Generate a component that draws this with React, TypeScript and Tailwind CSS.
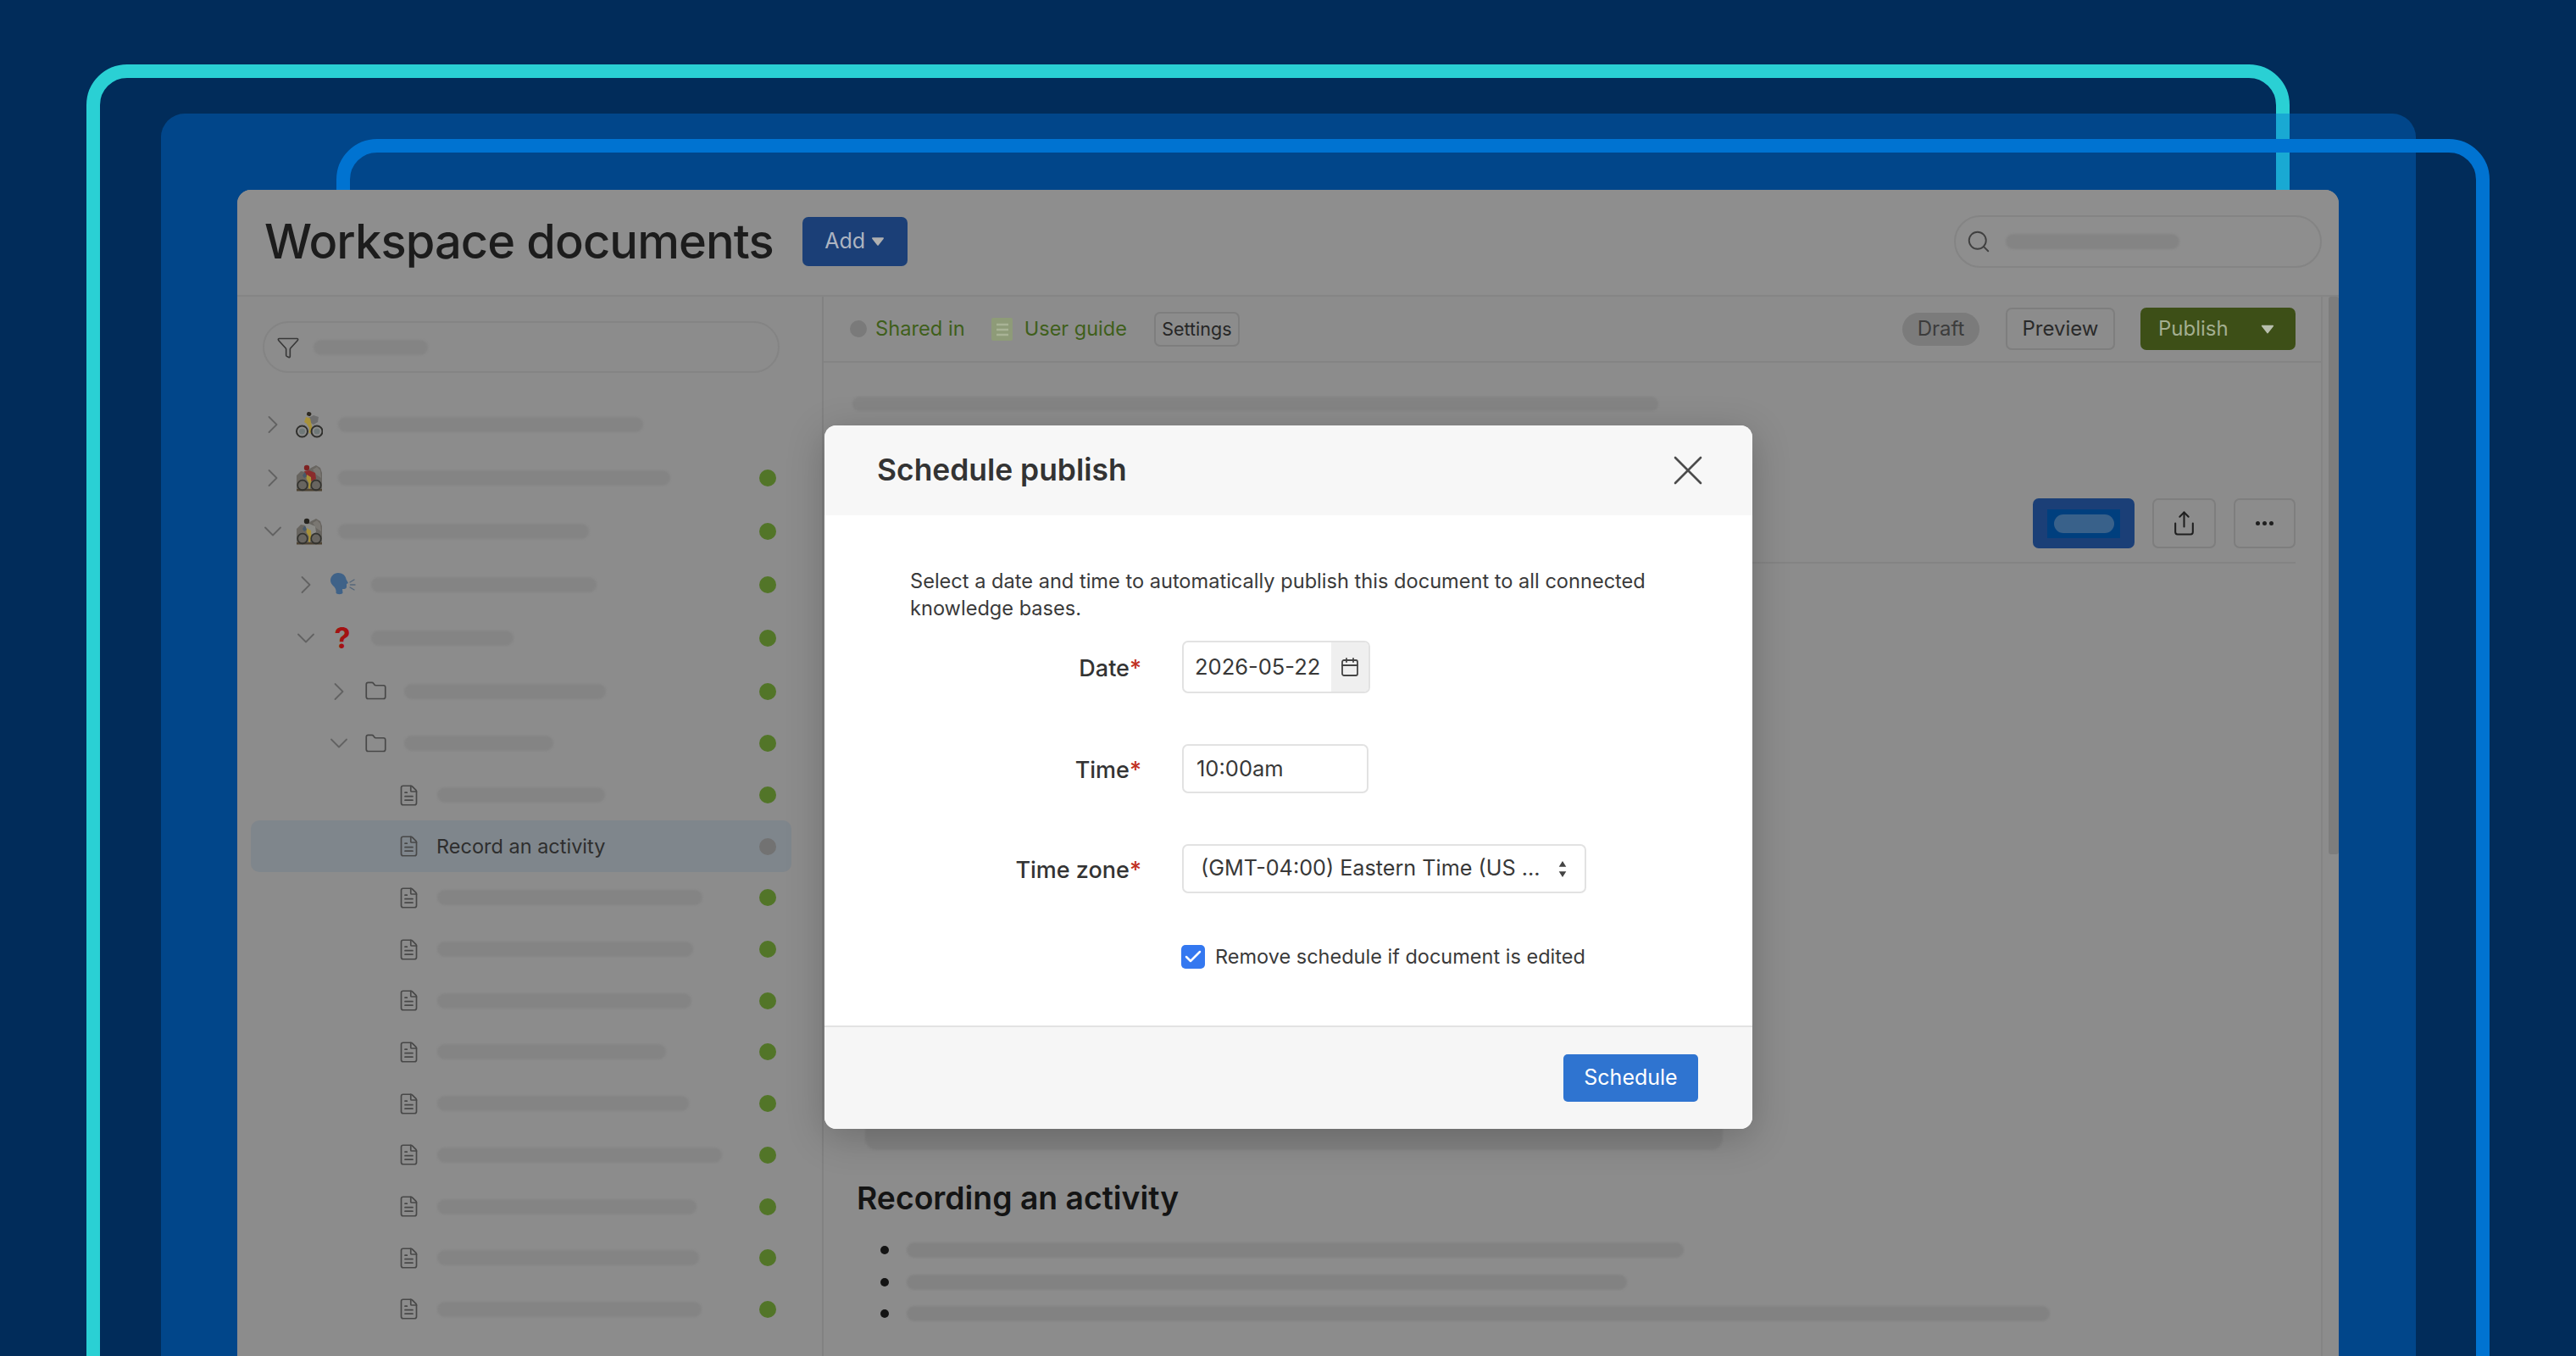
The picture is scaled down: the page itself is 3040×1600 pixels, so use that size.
import React from "react";
import { ChevronRight, ChevronDown, Folder, FileText, Funnel, Search, Calendar, Share, X, Check } from "lucide-react";

function Bike() {
  return (
    <svg viewBox="0 0 32 32" className="w-[32px] h-[32px]">
      <path d="M15 1c2.500 0 3.500 1 3.500 3l-1.500 2c-2 0-4-.5-4-2s.5-3 2-3z" fill="#2e2a22" />
      <path d="M15 8l6-3 6 2-1 6-5 3-5-3z" fill="#6d6d6d" />
      <path d="M12 7l5 1.500 1.500 7 1 5-1.500 6-2.500-.5.5-6-3-5-3-2z" fill="#a8923a" />
      <circle cx="7.500" cy="24" r="6.500" fill="none" stroke="#2f2f2c" strokeWidth="2" />
      <circle cx="25" cy="24" r="6.500" fill="none" stroke="#2f2f2c" strokeWidth="2" />
      <circle cx="7.500" cy="24" r="3.500" fill="#6f7878" />
      <circle cx="25" cy="24" r="3.500" fill="#6f7878" />
    </svg>
  );
}

function MountainBike({ shirt, helmet }: { shirt: string; helmet: string }) {
  return (
    <svg viewBox="0 0 32 32" className="w-[32px] h-[32px]">
      <path d="M1 31V13l5-5 6 1 6-5 6-3 5 3 2 6v21z" fill="#686560" />
      <path d="M20 6l5-3 4 4 1 9-6-4z" fill="#7a7772" />
      <path d="M1 29h30v2.500H1z" fill="#4f4434" />
      <circle cx="13" cy="4" r="3.200" fill={helmet} />
      <path d="M10 8l6-1 7 3 1 7-6 3-5-5z" fill={shirt} />
      <path d="M13 12l5 3 .5 8-2 6-1.500-1 .5-6-3-5z" fill="#a8923a" />
      <path d="M8 13l3-4 2 5-3 2z" fill="#47596a" />
      <circle cx="8" cy="24.500" r="5.800" fill="none" stroke="#33332f" strokeWidth="1.700" />
      <circle cx="24" cy="24.500" r="5.800" fill="none" stroke="#33332f" strokeWidth="1.700" />
    </svg>
  );
}

function Speaking() {
  return (
    <svg viewBox="0 0 32 32" className="w-[32px] h-[32px]">
      <path d="M11 2c5 0 9 3 9.500 7.500l2.500 4.500-2 1v3.500c0 1.500-1.500 2.500-3 2.500h-2l.5 4.500c-.5 2-7 2.500-8 0 .5-3-.5-5-2-7C4 16 2 14 2 11 2 6 6 2 11 2z" fill="#3f6288" />
      <path d="M25 13l5-3M25.500 16H31M25 19l5 3" stroke="#55677a" strokeWidth="1.400" strokeLinecap="round" />
    </svg>
  );
}

function Caret({ className }: { className: string }) {
  return (
    <svg viewBox="0 0 14 9" className={className}>
      <path d="M1.500 1h11L7 8z" fill="currentColor" stroke="currentColor" strokeWidth="1.500" strokeLinejoin="round" />
    </svg>
  );
}

function Guide() {
  return (
    <svg viewBox="0 0 25 27" className="w-[25px] h-[27px]">
      <rect x="0" y="0" width="25" height="27" rx="2" fill="#8e9b78" />
      <path d="M6 8h14M6 14h14M6 20h14" stroke="#a9b396" strokeWidth="2.500" />
    </svg>
  );
}

function Skeleton({ width, height, className }: { width: number; height: number; className: string }) {
  return <div className={className} style={{ width, height }} />;
}

type Row = { level: number; open?: boolean; icon: string; bar?: number; text?: string; gray?: boolean; noDot?: boolean; selected?: boolean };

const rows: Row[] = [
  { level: 0, icon: "bike", bar: 360, noDot: true },
  { level: 0, icon: "mtnRed", bar: 392 },
  { level: 0, open: true, icon: "mtnDark", bar: 296 },
  { level: 1, icon: "speak", bar: 266 },
  { level: 1, open: true, icon: "question", bar: 168 },
  { level: 2, icon: "folder", bar: 238 },
  { level: 2, open: true, icon: "folder", bar: 176 },
  { level: 3, icon: "file", bar: 198 },
  { level: 3, icon: "file", text: "Record an activity", gray: true, selected: true },
  { level: 3, icon: "file", bar: 313 },
  { level: 3, icon: "file", bar: 302 },
  { level: 3, icon: "file", bar: 300 },
  { level: 3, icon: "file", bar: 270 },
  { level: 3, icon: "file", bar: 297 },
  { level: 3, icon: "file", bar: 336 },
  { level: 3, icon: "file", bar: 306 },
  { level: 3, icon: "file", bar: 309 },
  { level: 3, icon: "file", bar: 312 },
];

function RowIcon({ icon }: { icon: string }) {
  if (icon === "bike") return <Bike />;
  if (icon === "mtnRed") return <MountainBike shirt="#8a2c2c" helmet="#7e2222" />;
  if (icon === "mtnDark") return <MountainBike shirt="#8a8a86" helmet="#26241f" />;
  if (icon === "speak") return <Speaking />;
  if (icon === "question") return <span className="text-[#a31212] text-[34px] leading-[32px] font-bold">?</span>;
  if (icon === "folder") return <Folder size={27} strokeWidth={1.500} className="text-[#484848]" />;
  return <FileText size={27} strokeWidth={1.500} className="text-[#484848]" />;
}

function TreeRow({ row, index }: { row: Row; index: number }) {
  const top = index < 6;
  return (
    <div
      className={`flex items-center pr-[18px] rounded-[10px] ${top ? "h-[63px]" : "h-[60.7px]"} ${row.selected ? "bg-[#7f868c]" : ""}`}
      style={{ paddingLeft: 16 + row.level * 39 }}
    >
      <div className="w-[20px] flex justify-center text-[#626262]">
        {row.level < 3 &&
          (row.open ? (
            <ChevronDown size={36} strokeWidth={1.200} className="shrink-0" />
          ) : (
            <ChevronRight size={36} strokeWidth={1.200} className="shrink-0" />
          ))}
      </div>
      <div className="ml-[17px] w-[32px] flex justify-center">
        <RowIcon icon={row.icon} />
      </div>
      {row.bar ? (
        <Skeleton width={row.bar} height={18} className="ml-[18px] rounded-full bg-[#848484] blur-[1px]" />
      ) : (
        <span className="ml-[17px] text-[23.500px] text-[#2e2e2e]">{row.text}</span>
      )}
      {!row.noDot && <div className={`ml-auto w-[20px] h-[20px] rounded-full ${row.gray ? "bg-[#727272]" : "bg-[#527528]"}`} />}
    </div>
  );
}

function Field({ label, children, className }: { label: string; children: React.ReactNode; className: string }) {
  return (
    <div className={`flex items-center ${className}`}>
      <div className="w-[374px] pt-[5px] text-right text-[27px] font-medium text-[#333333]">
        {label}
        <span className="text-[#c0321f]">*</span>
      </div>
      <div className="ml-[48px]">{children}</div>
    </div>
  );
}

export default function App() {
  return (
    <div className="relative w-[3040px] h-[1600px] overflow-hidden bg-[#012c5a] font-['Inter',sans-serif]">
      {/* decorative frames */}
      <div className="absolute left-[102px] top-[76px] w-[2600px] h-[1600px] rounded-[48px] border-[16px] border-[#2ad0d4]" />
      <div className="absolute left-[190px] top-[134px] w-[2661px] h-[1600px] rounded-[28px] bg-[#006fd2]/40" />
      <div className="absolute left-[397px] top-[164px] w-[2541px] h-[1600px] rounded-[48px] border-[16px] border-[#0073d1]" />

      <div className="relative pl-[280px] pt-[224px]">
        <div className="w-[2480px] h-[1376px] rounded-t-[16px] bg-[#8c8c8c] flex flex-col overflow-hidden">
          {/* header */}
          <div className="h-[126px] shrink-0 flex items-center pl-[32px] pr-[20px] pb-[3px] bg-[#8e8e8e] border-b-2 border-[#858585]">
            <h1 className="text-[56px] font-medium text-[#1c1c1c] tracking-[-0.9px]">Workspace documents</h1>
            <div className="ml-[34px] w-[124px] h-[58px] rounded-[7px] bg-[#1b3f77] flex items-center justify-center gap-[7px] text-[#adb4c1] text-[25px]">
              Add
              <Caret className="w-[16px] h-[10px] text-[#b0b0b0]" />
            </div>
            <div className="ml-auto w-[434px] h-[62px] rounded-full border-2 border-[#848484] flex items-center pl-[12px]">
              <Search size={30} strokeWidth={1.500} className="text-[#404040]" />
              <div className="ml-[17px] w-[205px] h-[18px] rounded-full bg-[#848484] blur-[1px]" />
            </div>
          </div>

          <div className="flex-1 flex min-h-0">
            {/* sidebar */}
            <div className="w-[692px] shrink-0 border-r-2 border-[#818181] pl-[16px] pr-[36px]">
              <div className="ml-[14px] mt-[29px] w-[610px] h-[61px] rounded-full border-2 border-[#848484] flex items-center pl-[14px]">
                <Funnel size={28} strokeWidth={1.400} className="text-[#383838]" />
                <div className="ml-[16px] w-[135px] h-[18px] rounded-full bg-[#848484] blur-[1px]" />
              </div>
              <div className="mt-[29px]">
                {rows.map((row, i) => (
                  <TreeRow key={i} row={row} index={i} />
                ))}
              </div>
            </div>

            {/* main */}
            <div className="flex-1 min-w-0 border-r-2 border-[#848484] flex flex-col">
              <div className="h-[78px] shrink-0 border-b-2 border-[#848484] flex items-center pl-[31px] pr-[30px] text-[24px]">
                <div className="w-[20px] h-[20px] rounded-full bg-[#7a7a7a]" />
                <span className="ml-[10px] text-[#3f5f1b] text-[23.700px]">Shared in</span>
                <div className="ml-[31px]">
                  <Guide />
                </div>
                <span className="ml-[14px] text-[#3f5f1b] text-[23.500px]">User guide</span>
                <div className="ml-[32px] w-[101px] h-[41px] rounded-[7px] border-2 border-[#7e7e7e] flex items-center justify-center text-[21.500px] text-[#262626]">
                  Settings
                </div>
                <div className="ml-auto w-[91px] h-[39px] rounded-full bg-[#7b7b7b] flex items-center justify-center text-[#3c3c3c]">
                  Draft
                </div>
                <div className="ml-[31px] w-[129px] h-[50px] rounded-[7px] border-2 border-[#7e7e7e] flex items-center justify-center text-[#2a2a2a]">
                  Preview
                </div>
                <div className="ml-[30px] w-[183px] h-[50px] rounded-[7px] bg-[#3d4f17] flex items-center pl-[21px] text-[#a3ae90]">
                  Publish
                  <Caret className="ml-[38px] w-[16px] h-[11px] text-[#b9bfae]" />
                </div>
              </div>

              <Skeleton width={951} height={17} className="ml-[34px] mt-[40px] rounded-full bg-[#848484] blur-[1px]" />

              <div className="mt-[103px] pr-[30px] flex justify-end gap-[21px]">
                <div className="w-[120px] h-[59px] rounded-[7px] bg-[#1b3f77] flex items-center justify-center">
                  <div className="w-[86px] h-[34px] bg-[#003f7e] flex items-center justify-center">
                    <div className="w-[71px] h-[22px] rounded-full bg-[#39618a]" />
                  </div>
                </div>
                <div className="w-[75px] h-[59px] rounded-[7px] border-2 border-[#7e7e7e] flex items-center justify-center">
                  <Share size={31} strokeWidth={1.600} className="text-[#1f1f1f]" />
                </div>
                <div className="w-[73px] h-[59px] rounded-[7px] border-2 border-[#7e7e7e] flex items-center justify-center gap-[3px]">
                  <div className="w-[5px] h-[5px] rounded-full bg-[#1f1f1f]" />
                  <div className="w-[5px] h-[5px] rounded-full bg-[#1f1f1f]" />
                  <div className="w-[5px] h-[5px] rounded-full bg-[#1f1f1f]" />
                </div>
              </div>
              <div className="mt-[16px] ml-[38px] mr-[30px] h-[2px] bg-[#848484]" />

              <Skeleton width={1012} height={692} className="ml-[49px] mt-0 rounded-[14px] bg-[#838383] blur-[1px]" />

              <h2 className="ml-[39px] mt-[35px] text-[37.300px] leading-[44px] font-semibold text-[#141414]">Recording an activity</h2>

              <ul className="mt-[30px] ml-[67px]">
                {[917, 850, 1349].map((w, i) => (
                  <li key={i} className="h-[37.700px] flex items-start">
                    <div className="mt-[4px] w-[10px] h-[10px] rounded-full bg-[#141414]" />
                    <Skeleton width={w} height={18} className="ml-[21px] rounded-full bg-[#828282] blur-[1px]" />
                  </li>
                ))}
              </ul>
            </div>

            {/* scroll track */}
            <div className="w-[19px] shrink-0 pl-[7px]">
              <div className="w-[12px] h-[658px] bg-[#7d7d7d] rounded-[3px]" />
            </div>
          </div>
        </div>
      </div>

      {/* modal */}
      <div className="absolute left-[973px] top-[502px] w-[1095px] h-[830px] rounded-[14px] overflow-hidden bg-white flex flex-col shadow-[0_10px_45px_rgba(0,0,0,0.22)]">
        <div className="h-[106px] shrink-0 bg-[#f7f7f7] flex items-center pl-[62px] pr-[46px] justify-between">
          <div className="text-[35.400px] font-semibold text-[#333333]">Schedule publish</div>
          <X size={60} strokeWidth={1.050} className="text-[#4c4c4c]" />
        </div>
        <div className="flex-1 pt-[62px]">
          <p className="ml-[101px] w-[900px] text-[23.600px] leading-[32px] text-[#3a3a3a]">
            Select a date and time to automatically publish this document to all connected knowledge bases.
          </p>
          <Field label="Date" className="mt-[22px]">
            <div className="w-[222px] h-[62px] rounded-[7px] border-2 border-[#e2e2e2] flex overflow-hidden">
              <div className="flex-1 pl-[13px] flex items-center text-[25.500px] text-[#383838]">2026-05-22</div>
              <div className="w-[44px] bg-[#efefef] flex items-center justify-center">
                <Calendar size={24} strokeWidth={1.800} className="text-[#444444]" />
              </div>
            </div>
          </Field>
          <Field label="Time" className="mt-[60px]">
            <div className="w-[220px] h-[58px] rounded-[7px] border-2 border-[#e2e2e2] flex items-center pl-[15px] text-[25.500px] text-[#383838]">
              10:00am
            </div>
          </Field>
          <Field label="Time zone" className="mt-[60px]">
            <div className="w-[477px] h-[58px] rounded-[7px] border-2 border-[#e2e2e2] flex items-center pl-[20px] text-[25.200px] text-[#383838]">
              (GMT-04:00) Eastern Time (US ...
              <svg viewBox="0 0 12 22" className="ml-[21px] w-[12px] h-[21px]">
                <path d="M6 1l4.500 7h-9zM6 21l-4.500-7h9z" fill="#444444" />
              </svg>
            </div>
          </Field>
          <div className="mt-[57px] ml-[421px] flex items-center">
            <div className="w-[28px] h-[28px] rounded-[5px] bg-[#3478f0] flex items-center justify-center">
              <Check size={24} strokeWidth={2.500} className="text-white" />
            </div>
            <span className="ml-[12px] text-[23.500px] text-[#3a3a3a]">Remove schedule if document is edited</span>
          </div>
        </div>
        <div className="h-[122px] shrink-0 border-t-2 border-[#e2e2e2] bg-[#f6f6f6] flex items-center justify-end pr-[64px]">
          <div className="w-[159px] h-[56px] rounded-[5px] bg-[#2f74d0] flex items-center justify-center text-white text-[25px]">
            Schedule
          </div>
        </div>
      </div>
    </div>
  );
}
